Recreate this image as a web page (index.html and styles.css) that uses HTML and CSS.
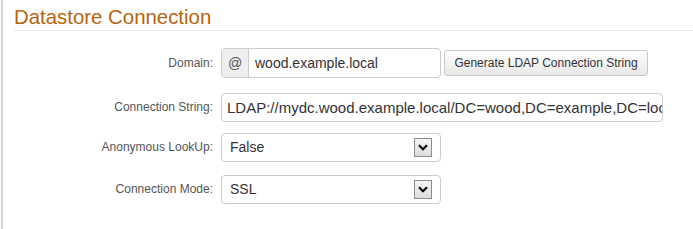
FILE: index.html
```html
<!DOCTYPE html>
<html>
<head>
<meta charset="utf-8">
<link rel="stylesheet" href="styles.css">
</head>
<body>
<div class="panel">
  <h2 class="title">Datastore Connection</h2>
  <div class="form">
    <div class="row">
      <label class="label">Domain:</label>
      <div class="field">
        <div class="group">
          <span class="addon">@</span>
          <span class="group-input">wood.example.local</span>
        </div>
        <button class="btn" type="button">Generate LDAP Connection String</button>
      </div>
    </div>
    <div class="row row-2">
      <label class="label">Connection String:</label>
      <div class="field">
        <div class="text-input wide"><span class="val long">LDAP://mydc.wood.example.local/DC=wood,DC=example,DC=local</span></div>
      </div>
    </div>
    <div class="row">
      <label class="label">Anonymous LookUp:</label>
      <div class="field">
        <div class="select">
          <span class="val">False</span>
          <span class="arrow"><svg width="10" height="7" viewBox="0 0 10 7"><path d="M1 1.2 L5 5.2 L9 1.2" fill="none" stroke="#000" stroke-width="2.2"/></svg></span>
        </div>
      </div>
    </div>
    <div class="row">
      <label class="label">Connection Mode:</label>
      <div class="field">
        <div class="select">
          <span class="val">SSL</span>
          <span class="arrow"><svg width="10" height="7" viewBox="0 0 10 7"><path d="M1 1.2 L5 5.2 L9 1.2" fill="none" stroke="#000" stroke-width="2.2"/></svg></span>
        </div>
      </div>
    </div>
  </div>
</div>
</body>
</html>
```
FILE: styles.css
```css
html, body {
  margin: 0;
  padding: 0;
  background: #fff;
  font-family: "Liberation Sans", Arial, sans-serif;
}
.panel {
  margin-left: 1px;
  border-left: 2px solid #d4d4d4;
  padding-left: 11px;
  height: 229px;
  box-sizing: border-box;
  padding-top: 5px;
}
.title {
  margin: 0;
  font-size: 20.4px;
  font-weight: normal;
  line-height: 24px;
  color: #b8640e;
  padding-bottom: 1px;
  border-bottom: 1px solid #e6e6e6;
}
.form {
  margin-top: 17px;
  display: flex;
  flex-direction: column;
  gap: 12px;
}
.row {
  display: flex;
  align-items: center;
  height: 30px;
}
.row-2 { margin-top: 2px; margin-bottom: -2px; }
.label {
  padding-right: 8px;
  box-sizing: border-box;
  width: 207px;
  text-align: right;
  font-size: 12px;
  color: #555;
}
.field {
  display: flex;
  align-items: center;
}
.group {
  display: flex;
  width: 220px;
  height: 30px;
  box-sizing: border-box;
  border: 1px solid #ccc;
  border-radius: 4px;
  overflow: hidden;
}
.addon {
  width: 26px;
  flex: none;
  background: #eee;
  border-right: 1px solid #ccc;
  display: flex;
  align-items: center;
  justify-content: center;
  font-size: 14px;
  color: #555;
}
.group-input {
  display: flex;
  align-items: center;
  padding-left: 6px;
  font-size: 14px;
  color: #333;
}
.btn {
  margin-left: 3px;
  width: 204px;
  height: 26px;
  border: 1px solid #c8c8c8;
  border-radius: 3px;
  background: linear-gradient(#ffffff, #e8e8e8);
  font-family: "Liberation Sans", Arial, sans-serif;
  font-size: 12px;
  color: #333;
  padding: 0;
}
.text-input {
  height: 29px;
  box-sizing: border-box;
  border: 1px solid #ccc;
  border-radius: 4px;
  display: flex;
  align-items: center;
  overflow: hidden;
  white-space: nowrap;
  padding-left: 5px;
  padding-right: 6px;
}
.wide { width: 442px; }
.val {
  font-size: 14px;
  color: #333;
}
.long { font-size: 15px; }
.select {
  width: 220px;
  height: 29px;
  box-sizing: border-box;
  border: 1px solid #ccc;
  border-radius: 4px;
  display: flex;
  align-items: center;
  justify-content: space-between;
  padding-left: 8px;
  padding-right: 8px;
}
.arrow {
  width: 18px;
  height: 19px;
  box-sizing: border-box;
  border: 1px solid #8c8c8c;
  background: linear-gradient(#f6f6f6, #dcdcdc);
  display: flex;
  align-items: center;
  justify-content: center;
}
```
